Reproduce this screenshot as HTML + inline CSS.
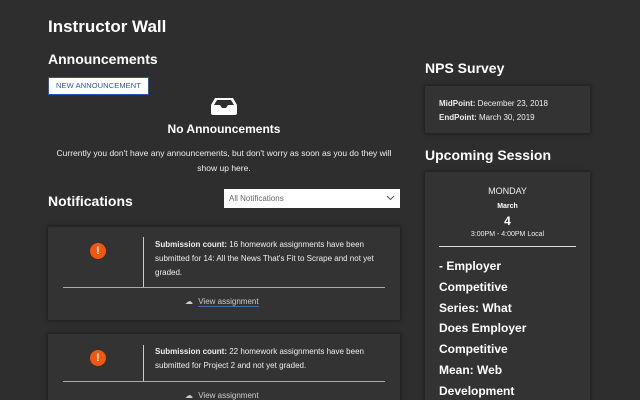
<!DOCTYPE html>
<html><head><style>
*{margin:0;padding:0;box-sizing:border-box}
html,body{width:640px;height:400px;overflow:hidden}
body{background:#2e2e2e;font-family:"Liberation Sans",sans-serif;color:#fff;position:relative}
.a{position:absolute;white-space:nowrap}
.card{position:absolute;background:#333;box-shadow:0 0 4px 1px rgba(0,0,0,.35)}
.t8{font-size:8px;color:#eee}
</style></head><body>
<div class="a" style="left:48px;top:17px;font-size:17px;font-weight:bold">Instructor Wall</div>
<div class="a" style="left:48px;top:51px;font-size:14px;font-weight:bold">Announcements</div>
<div class="a" style="left:48px;top:77px;width:101px;height:18px;background:#fff;border:1px solid #2a55b8;color:#2a55b8;font-size:7.5px;text-align:center;line-height:16px;letter-spacing:.1px">NEW ANNOUNCEMENT</div>
<svg class="a" style="left:210px;top:97px" width="28" height="18" viewBox="0 0 28 18"><path d="M5 1h18l4 7v8a2 2 0 0 1-2 2H3a2 2 0 0 1-2-2V8z" fill="#fff"/><path d="M4 8l3-5h14l3 5h-6l-2 3h-4l-2-3z" fill="#2e2e2e"/></svg>
<div class="a" style="left:48px;width:352px;text-align:center;top:122px;font-size:12px;font-weight:bold">No Announcements</div>
<div class="a" style="left:48px;width:352px;text-align:center;top:146px;line-height:15px;font-size:8.5px;color:#eee">Currently you don't have any announcements, but don't worry as soon as you do they will<br>show up here.</div>
<div class="a" style="left:48px;top:193px;font-size:14px;font-weight:bold">Notifications</div>
<div class="a" style="left:224px;top:189px;width:176px;height:19px;background:#fff;color:#666;font-size:8px;line-height:19px;padding-left:5px">All Notifications<svg style="position:absolute;right:5px;top:6px" width="9" height="6" viewBox="0 0 9 6"><path d="M1 1l3.5 3.5L8 1" stroke="#555" fill="none"/></svg></div>

<div class="card" style="left:48px;top:227px;width:352px;height:93px"></div>
<div class="card" style="left:48px;top:334px;width:352px;height:80px"></div>

<div class="a" style="left:90px;top:243px;width:16px;height:16px;border-radius:50%;background:#f2560f;font-size:11px;font-weight:bold;text-align:center;line-height:16px">!</div>
<div class="a" style="left:143px;top:237px;width:1px;height:50px;background:#ccc"></div>
<div class="a t8" style="left:155px;top:238px;white-space:normal;width:235px;line-height:14px"><b>Submission count:</b> 16 homework assignments have been submitted for 14: All the News That's Fit to Scrape and not yet graded.</div>
<div class="a" style="left:63px;top:287px;width:322px;height:1px;background:#aaa"></div>
<div class="a t8" style="left:185px;top:297px;color:#ccc">☁ <span style="border-bottom:1px solid #4a6aa8;margin-left:3px">View assignment</span></div>

<div class="a" style="left:90px;top:350px;width:16px;height:16px;border-radius:50%;background:#f2560f;font-size:11px;font-weight:bold;text-align:center;line-height:16px">!</div>
<div class="a" style="left:143px;top:345px;width:1px;height:36px;background:#ccc"></div>
<div class="a t8" style="left:155px;top:345px;white-space:normal;width:235px;line-height:14px"><b>Submission count:</b> 22 homework assignments have been submitted for Project 2 and not yet graded.</div>
<div class="a" style="left:63px;top:381px;width:322px;height:1px;background:#aaa"></div>
<div class="a t8" style="left:185px;top:391px;color:#ccc">☁ <span style="margin-left:3px">View assignment</span></div>

<div class="a" style="left:425px;top:60px;font-size:14px;font-weight:bold">NPS Survey</div>
<div class="card" style="left:425px;top:86px;width:165px;height:47px"></div>
<div class="a t8" style="left:439px;top:97px;line-height:14px"><b>MidPoint:</b> December 23, 2018<br><b>EndPoint:</b> March 30, 2019</div>
<div class="a" style="left:425px;top:147px;font-size:14px;font-weight:bold">Upcoming Session</div>
<div class="card" style="left:425px;top:172px;width:165px;height:240px"></div>
<div class="a" style="left:425px;width:165px;text-align:center;top:186px;font-size:9px;color:#eee">MONDAY</div>
<div class="a" style="left:425px;width:165px;text-align:center;top:203px;font-size:7px;font-weight:bold">March</div>
<div class="a" style="left:425px;width:165px;text-align:center;top:214px;font-size:12px;font-weight:bold">4</div>
<div class="a" style="left:425px;width:165px;text-align:center;top:231px;font-size:7px;color:#eee">3:00PM - 4:00PM Local</div>
<div class="a" style="left:439px;top:246px;width:137px;height:1px;background:#ddd"></div>
<div class="a" style="left:439px;top:256px;font-size:12px;font-weight:bold;line-height:20.8px">- Employer<br>Competitive<br>Series: What<br>Does Employer<br>Competitive<br>Mean: Web<br>Development</div>
</body></html>
